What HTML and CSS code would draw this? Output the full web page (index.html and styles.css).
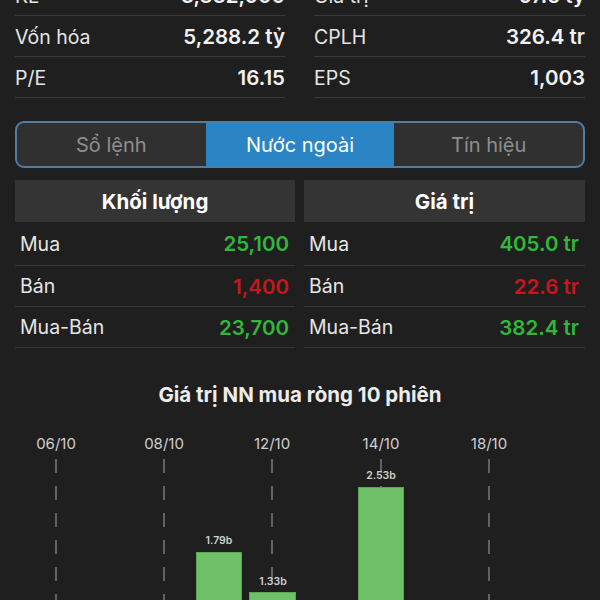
FILE: index.html
```html
<!DOCTYPE html>
<html lang="vi">
<head>
<meta charset="utf-8">
<title>Nước ngoài</title>
<link rel="stylesheet" href="styles.css">
</head>
<body>
<div class="page">
  <div class="stats">
    <div class="stat-col">
      <div class="stat-row"><span class="lbl">KL</span><span class="val">3,332,000</span></div>
      <div class="stat-row"><span class="lbl">Vốn hóa</span><span class="val">5,288.2 tỷ</span></div>
      <div class="stat-row"><span class="lbl">P/E</span><span class="val">16.15</span></div>
    </div>
    <div class="stat-col">
      <div class="stat-row"><span class="lbl">Giá trị</span><span class="val">97.5 tỷ</span></div>
      <div class="stat-row"><span class="lbl">CPLH</span><span class="val">326.4 tr</span></div>
      <div class="stat-row"><span class="lbl">EPS</span><span class="val">1,003</span></div>
    </div>
  </div>

  <div class="tabs">
    <div class="tab">Sổ lệnh</div>
    <div class="tab active">Nước ngoài</div>
    <div class="tab">Tín hiệu</div>
  </div>

  <div class="foreign">
    <div class="f-col">
      <div class="f-head">Khối lượng</div>
      <div class="f-row first"><span class="lbl">Mua</span><span class="val up">25,100</span></div>
      <div class="f-row"><span class="lbl">Bán</span><span class="val down">1,400</span></div>
      <div class="f-row"><span class="lbl">Mua-Bán</span><span class="val up">23,700</span></div>
    </div>
    <div class="f-col">
      <div class="f-head">Giá trị</div>
      <div class="f-row first"><span class="lbl">Mua</span><span class="val up">405.0 tr</span></div>
      <div class="f-row"><span class="lbl">Bán</span><span class="val down">22.6 tr</span></div>
      <div class="f-row"><span class="lbl">Mua-Bán</span><span class="val up">382.4 tr</span></div>
    </div>
  </div>
</div>

<div class="chart">
  <div class="chart-title">Giá trị NN mua ròng 10 phiên</div>
  <svg class="chart-svg" width="600" height="200" viewBox="0 407 600 200" xmlns="http://www.w3.org/2000/svg">
    <g class="dates" font-size="15" fill="#cfcfcf" text-anchor="middle">
      <text x="56" y="450">06/10</text>
      <text x="164" y="450">08/10</text>
      <text x="272" y="450">12/10</text>
      <text x="381" y="450">14/10</text>
      <text x="489" y="450">18/10</text>
    </g>
    <g stroke="#7a7a7a" stroke-width="1.5" stroke-dasharray="14 13">
      <line x1="56" y1="460" x2="56" y2="620"/>
      <line x1="164" y1="460" x2="164" y2="620"/>
      <line x1="272" y1="460" x2="272" y2="620"/>
      <line x1="381" y1="460" x2="381" y2="620"/>
      <line x1="489" y1="460" x2="489" y2="620"/>
    </g>
    <g fill="#70c069" stroke="#58a852" stroke-width="1">
      <rect x="196.5" y="553.5" width="45" height="100"/>
      <rect x="249.5" y="593.5" width="46" height="100"/>
      <rect x="358.5" y="488.5" width="45" height="200"/>
    </g>
    <g class="bar-lbl" font-size="10.5" font-weight="600" fill="#d0d0d0" text-anchor="middle">
      <text x="219" y="545">1.79b</text>
      <text x="273" y="586">1.33b</text>
      <text x="381" y="480">2.53b</text>
    </g>
  </svg>
</div>
</body>
</html>
```

FILE: styles.css
```css
html, body {
  margin: 0;
  padding: 0;
  background: #1f1f1f;
  color: #ececec;
  font-family: "Inter", "Roboto", "Liberation Sans", sans-serif;
  overflow: hidden;
}

.page {
  padding: 0 15px;
}

.stats {
  display: grid;
  grid-template-columns: 270px 271px;
  column-gap: 29px;
  margin-top: -25px;
}

.stat-row {
  height: 40px;
  border-bottom: 1px solid #3a3a3a;
  display: flex;
  align-items: center;
  justify-content: space-between;
  font-size: 19.5px;
  padding-top: 1px;
  box-sizing: content-box;
  height: 39px;
}

.stat-row .lbl {
  color: #e6e6e6;
  font-weight: 400;
}

.stat-row .val {
  color: #f2f2f2;
  font-weight: 600;
  font-size: 20.5px;
}

.tabs {
  margin-top: 23px;
  height: 43px;
  border: 2px solid #4f7ea5;
  border-radius: 9px;
  display: grid;
  grid-template-columns: 1fr 1fr 1fr;
  overflow: hidden;
  background: #303030;
}

.tab {
  display: flex;
  align-items: center;
  justify-content: center;
  font-size: 20px;
  color: #8e8e8e;
}

.tab.active {
  background: #2b85c5;
  color: #ffffff;
}

.foreign {
  margin-top: 12px;
  display: grid;
  grid-template-columns: 280px 281px;
  column-gap: 9px;
}

.f-head {
  height: 42px;
  background: #343434;
  display: flex;
  align-items: center;
  justify-content: center;
  font-size: 20.5px;
  font-weight: 700;
  color: #ffffff;
}

.f-row {
  height: 40px;
  border-bottom: 1px solid #383838;
  display: flex;
  align-items: center;
  justify-content: space-between;
  padding: 0 6px 0 5px;
  font-size: 19.5px;
}

.f-row.first {
  height: 43px;
}

.f-row .lbl {
  color: #e6e6e6;
}

.f-row .val {
  font-weight: 600;
  font-size: 20.5px;
}

.up {
  color: #2fb83a;
}

.down {
  color: #c8161e;
}

.chart-title {
  margin-top: 34px;
  height: 26px;
  line-height: 26px;
  text-align: center;
  font-size: 20.5px;
  font-weight: 700;
  color: #ececec;
}

.chart-svg {
  display: block;
  margin-top: -2px;
  font-family: "Inter", "Roboto", "Liberation Sans", sans-serif;
}
```
